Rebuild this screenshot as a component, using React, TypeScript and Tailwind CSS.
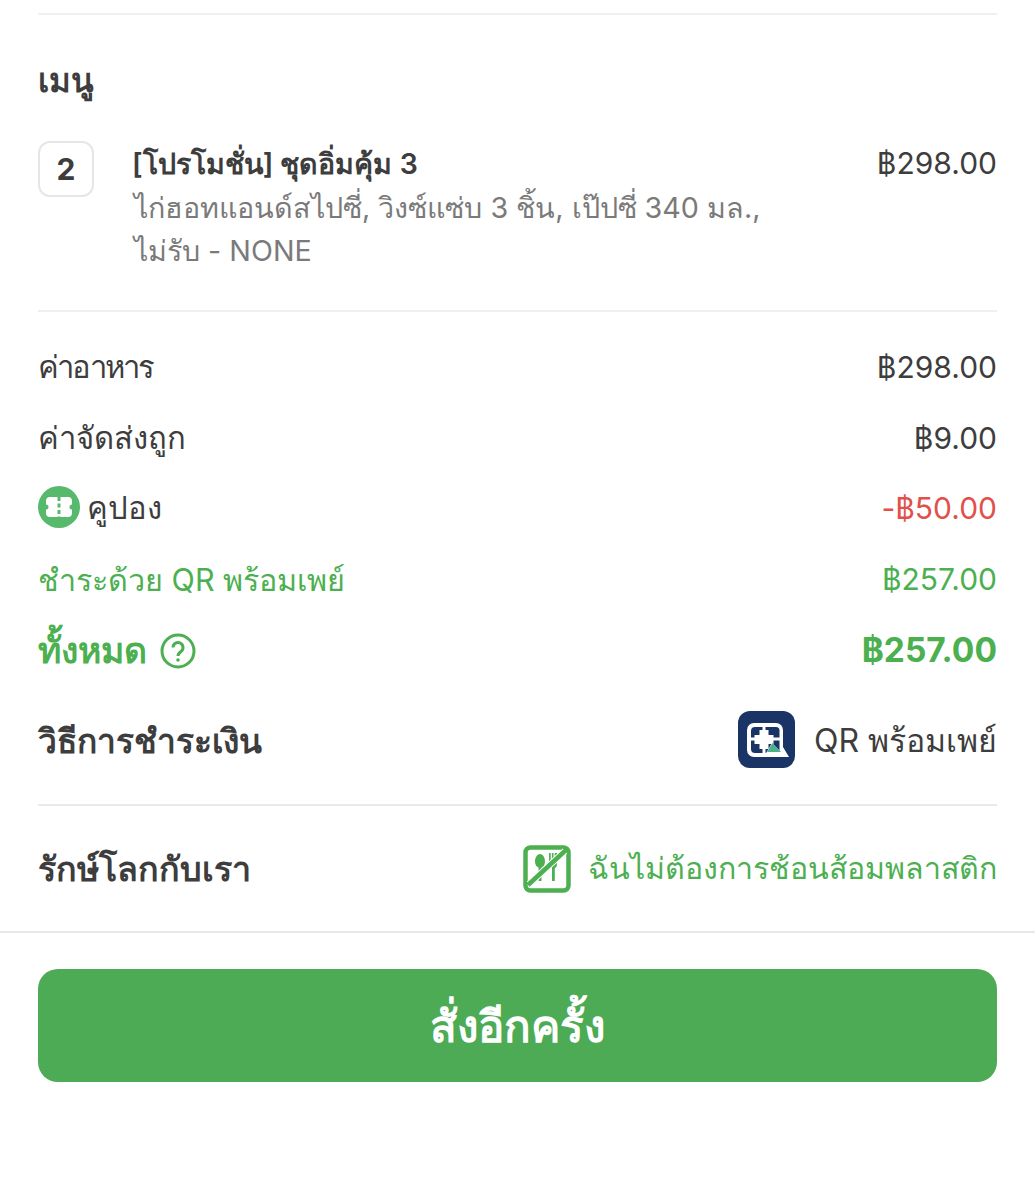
const font = { fontFamily: '"Inter", "Noto Sans", "Liberation Sans", sans-serif' };

function CouponIcon() {
  return (
    <svg width="42" height="42" viewBox="0 0 42 42" className="shrink-0 -translate-y-[2px]">
      <circle cx="21" cy="21" r="21" fill="#57b96c" />
      <path fill="#fff" d="M12 11h18a4 4 0 0 1 4 4v3.500a2.500 2.500 0 0 0 0 5V27a4 4 0 0 1-4 4H12a4 4 0 0 1-4-4v-3.500a2.500 2.500 0 0 0 0-5V15a4 4 0 0 1 4-4z" />
      <path d="M21 11v20" stroke="#57b96c" strokeWidth="3" strokeDasharray="4 2.500" />
    </svg>
  );
}

function QrIcon() {
  return (
    <svg width="57" height="57" viewBox="0 0 57 57" className="shrink-0 -translate-y-[2px]">
      <rect width="57" height="57" rx="12" fill="#1a3466" />
      <path d="M16 12h22a7 7 0 0 1 7 7v17l6 10H16a7 7 0 0 1-7-7V19a7 7 0 0 1 7-7z" fill="#fff" />
      <path d="M17 16h21a3.500 3.500 0 0 1 3.500 3.500V42H17a4 4 0 0 1-4-4V20a4 4 0 0 1 4-4z" fill="#1a3466" />
      <path d="M26 15v28M12 28h30" stroke="#fff" strokeWidth="3" />
      <path d="M21.500 19h9v5h5v9h-5v5h-9v-5h-5v-9h5z" fill="#fff" />
      <path d="M28 42l6-10 10 10z" fill="#fff" />
      <path d="M29 41l5.500-9 8.500 9z" fill="#4cb18e" />
    </svg>
  );
}

function NoPlasticIcon() {
  return (
    <svg width="48" height="48" viewBox="0 0 48 48" className="shrink-0">
      <rect x="2.500" y="2.500" width="43" height="43" rx="5" fill="none" stroke="#4caf50" strokeWidth="4.500" />
      <path d="M17 9c3.200 0 5 4 5 7.500 0 3.500-1.800 5.500-3.500 6V36h-3V22.500c-1.700-.5-3.500-2.500-3.500-6C12 13 13.800 9 17 9z" fill="#4caf50" />
      <path d="M26 8h1.700v8h1.200V8h1.600v8h1.200V8H34v11c0 2.500-1 3.500-2.200 4v13h-2.800V23c-1.200-.5-3-1.500-3-4z" fill="#4caf50" />
      <path d="M6 39L42 6" stroke="#fff" strokeWidth="6.500" />
      <path d="M5 40L43 5" stroke="#4caf50" strokeWidth="4.500" />
    </svg>
  );
}

function HelpIcon() {
  return (
    <svg width="36" height="36" viewBox="0 0 36 36" className="shrink-0">
      <circle cx="18" cy="18" r="16" fill="none" stroke="#4caf50" strokeWidth="3" />
      <path d="M13 14.500a5 5 0 1 1 8 4c-2 1.500-3 2.500-3 4.500" fill="none" stroke="#4caf50" strokeWidth="3" />
      <circle cx="18" cy="27" r="1.800" fill="#4caf50" />
    </svg>
  );
}

export default function App() {
  return (
    <div style={font} className="w-[1035px] h-[1200px] bg-white text-[#3d3d3d] overflow-hidden">
      <div className="px-[38px] pt-[13px]">
        <div className="h-[2px] bg-[#f0f0f0]" />
        <h2 className="mt-[40px] h-[50px] flex items-center text-[33px] font-semibold leading-none">เมนู</h2>
        <div className="mt-[36px] flex items-start">
          <div className="w-[56px] h-[56px] shrink-0 rounded-[12px] border-2 border-[#e6e6e6] flex items-center justify-center text-[30px] font-bold">2</div>
          <div className="ml-[38px] flex-1 min-w-0">
            <div className="text-[28.500px] leading-[45px] font-semibold">[โปรโมชั่น] ชุดอิ่มคุ้ม 3</div>
            <div className="pl-[2px] text-[28.700px] leading-[43px] text-[#7a7a7a] w-[680px]">ไก่ฮอทแอนด์สไปซี่, วิงซ์แซ่บ 3 ชิ้น, เป๊ปซี่ 340 มล.,<br />ไม่รับ - NONE</div>
          </div>
          <div className="text-[30px] leading-[44px] shrink-0">฿298.00</div>
        </div>
        <div className="mt-[38px] h-[2px] bg-[#efefef]" />
        <div className="mt-[20px] flex flex-col text-[31px]">
          <div className="h-[71px] flex items-center justify-between"><span className="tracking-[-1.800px]">ค่าอาหาร</span><span className="text-[30px]">฿298.00</span></div>
          <div className="h-[70px] flex items-center justify-between"><span>ค่าจัดส่งถูก</span><span className="text-[30px]">฿9.00</span></div>
          <div className="h-[71px] flex items-center justify-between"><span className="flex items-center gap-[7px]"><CouponIcon />คูปอง</span><span className="text-[30px] text-[#e2504c]">-฿50.00</span></div>
          <div className="h-[71px] flex items-center justify-between text-[#4caf50]"><span className="text-[30.500px]">ชำระด้วย QR พร้อมเพย์</span><span className="text-[30px]">฿257.00</span></div>
          <div className="h-[71px] flex items-center justify-between text-[#4caf50] font-bold"><span className="flex items-center gap-[13px] text-[35.500px]">ทั้งหมด <HelpIcon /></span><span className="text-[33.500px]">฿257.00</span></div>
        </div>
        <div className="mt-[14px] h-[82px] flex items-center justify-between">
          <span className="text-[33.500px] font-semibold">วิธีการชำระเงิน</span>
          <span className="flex items-center gap-[19px] text-[32px]"><QrIcon />QR พร้อมเพย์</span>
        </div>
        <div className="mt-[22px] h-[2px] bg-[#eaeaea]" />
        <div className="h-[125px] flex items-center justify-between">
          <span className="text-[34px] font-semibold">รักษ์โลกกับเรา</span>
          <span className="flex items-center gap-[17px] text-[30.300px] text-[#4caf50]"><NoPlasticIcon />ฉันไม่ต้องการช้อนส้อมพลาสติก</span>
        </div>
      </div>
      <div className="h-[2px] bg-[#e8e8e8]" />
      <div className="px-[38px] pt-[36px]">
        <button className="w-full h-[113px] rounded-[20px] bg-[#4cab54] text-white text-[44px] font-bold">สั่งอีกครั้ง</button>
      </div>
    </div>
  );
}
